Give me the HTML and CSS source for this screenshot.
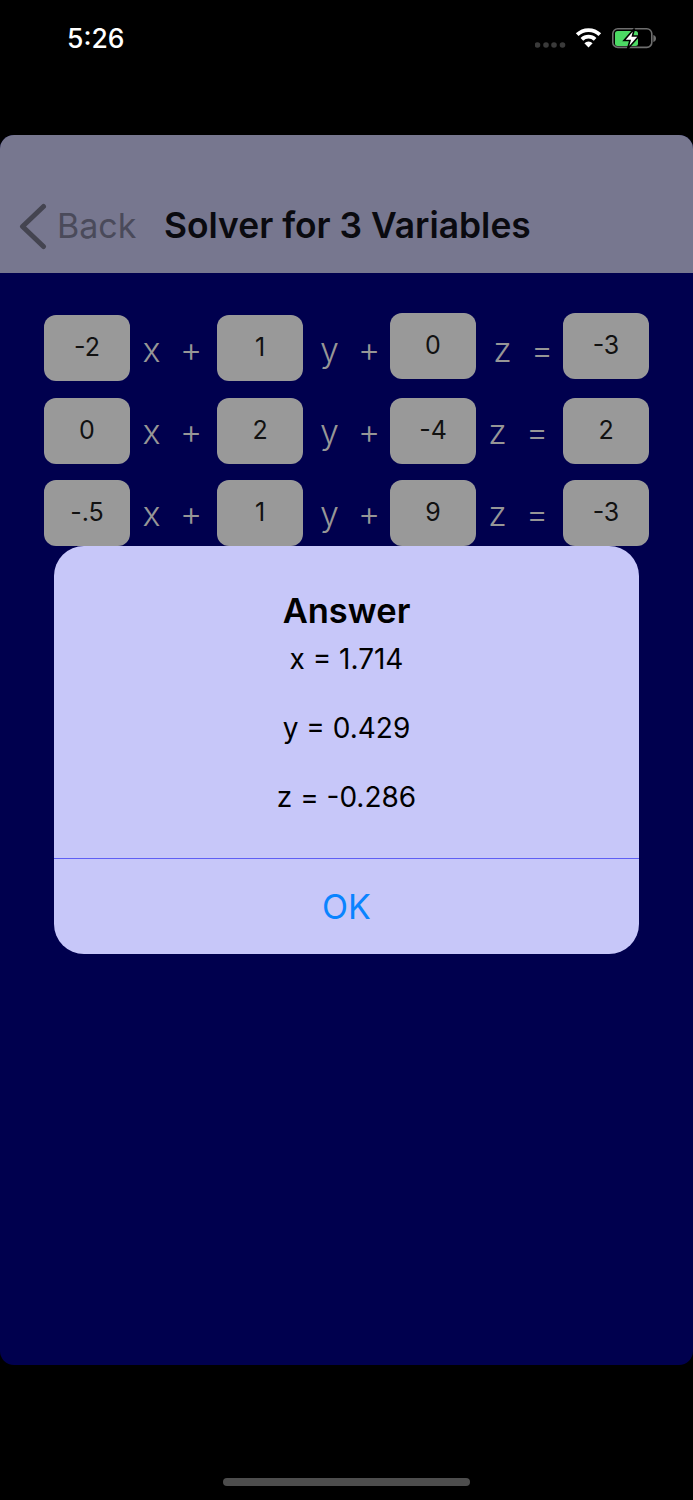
FILE: index.html
```html
<!DOCTYPE html>
<html lang="en">
<head>
  <meta charset="UTF-8">
  <title>Solver for 3 Variables</title>
  <link rel="stylesheet" href="styles.css">
</head>
<body>

  <div class="status-bar">
    <span class="clock">5:26</span>
    <svg class="status-icons" viewBox="536 27 122 22" width="122" height="22">
      <circle cx="538.5" cy="45" r="2.8" fill="#3a3a3a"/>
      <circle cx="547" cy="45" r="2.8" fill="#3a3a3a"/>
      <circle cx="555" cy="45" r="2.8" fill="#3a3a3a"/>
      <circle cx="563.5" cy="45" r="2.8" fill="#3a3a3a"/>
      <path d="M578.2 34.7A16 16 0 0 1 600.8 34.7" fill="none" stroke="#fff" stroke-width="3.8"/>
      <path d="M582.9 39.4A9.4 9.4 0 0 1 596.1 39.4" fill="none" stroke="#fff" stroke-width="3.8"/>
      <path d="M589.5 47.5L585.4 43.2A5.8 5.8 0 0 1 593.6 43.2Z" fill="#fff"/>
      <rect x="613.8" y="28.8" width="39" height="18.6" rx="5" fill="none" stroke="#6e6e6e" stroke-width="1.6"/>
      <path d="M654.3 35v7c1.700-.5 2.700-1.800 2.700-3.500s-1-3-2.700-3.500Z" fill="#6e6e6e"/>
      <rect x="616" y="31" width="23" height="15" rx="2.500" fill="#4cd964"/>
      <path d="M635.500 28.500L625 40.500H631L628.500 49L640 36H633.500Z" fill="#fff" stroke="#000" stroke-width="1.600"/>
    </svg>
  </div>

  <div class="screen">
    <div class="nav-bar">
      <a class="back">
        <svg class="chevron" viewBox="0 0 30 48" width="30" height="48">
          <path d="M26.500 4.500L5.500 24.500L26.500 44.500" fill="none" stroke="#444450" stroke-width="5" stroke-linecap="round" stroke-linejoin="round"/>
        </svg>
        <span>Back</span>
      </a>
      <h1>Solver for 3 Variables</h1>
    </div>

    <div class="equations">
      <div class="row first">
        <div class="cell">-2</div>
        <div class="gap"><span class="var">x</span><span class="op">+</span></div>
        <div class="cell">1</div>
        <div class="gap wide"><span class="var">y</span><span class="op">+</span></div>
        <div class="cell raised">0</div>
        <div class="gap wide"><span class="var">z</span><span class="op">=</span></div>
        <div class="cell raised">-3</div>
      </div>
      <div class="row">
        <div class="cell">0</div>
        <div class="gap"><span class="var">x</span><span class="op">+</span></div>
        <div class="cell">2</div>
        <div class="gap wide"><span class="var">y</span><span class="op">+</span></div>
        <div class="cell">-4</div>
        <div class="gap"><span class="var">z</span><span class="op">=</span></div>
        <div class="cell">2</div>
      </div>
      <div class="row">
        <div class="cell">-.5</div>
        <div class="gap"><span class="var">x</span><span class="op">+</span></div>
        <div class="cell">1</div>
        <div class="gap wide"><span class="var">y</span><span class="op">+</span></div>
        <div class="cell">9</div>
        <div class="gap"><span class="var">z</span><span class="op">=</span></div>
        <div class="cell">-3</div>
      </div>
    </div>

    <div class="alert">
      <div class="alert-body">
        <h2>Answer</h2>
        <p>x = 1.714</p>
        <p>y = 0.429</p>
        <p>z = -0.286</p>
      </div>
      <div class="alert-button">OK</div>
    </div>
  </div>

  <div class="home-area">
    <div class="home-indicator"></div>
  </div>

</body>
</html>
```

FILE: styles.css
```css
body {
  margin: 0;
  width: 693px;
  height: 1500px;
  overflow: hidden;
  background: #000;
  font-family: Inter, "Liberation Sans", sans-serif;
}
.status-bar {
  height: 135px;
  box-sizing: border-box;
  padding: 27px 36px 0 67px;
  display: flex;
  justify-content: space-between;
  align-items: flex-start;
}
.clock {
  color: #fff;
  font-size: 26.500px;
  font-weight: 500;
  line-height: 22px;
}
.status-icons {
  display: block;
}
.screen {
  position: relative;
  height: 1230px;
  background: #00004e;
  border-radius: 14px;
}
.nav-bar {
  height: 138px;
  box-sizing: border-box;
  padding: 0 0 23px 17px;
  background: #77778f;
  border-radius: 14px 14px 0 0;
  display: flex;
  align-items: flex-end;
}
.back {
  display: flex;
  align-items: center;
  gap: 10px;
  width: 147px;
  color: #4a4a5a;
  font-size: 34px;
  line-height: 48px;
}
.chevron {
  display: block;
  width: 30px;
  height: 48px;
}
.nav-bar h1 {
  margin: 0;
  color: #0a0a0f;
  font-size: 35.400px;
  font-weight: 600;
  line-height: 48px;
}
.equations {
  padding: 42px 0 0 44px;
  display: flex;
  flex-direction: column;
  gap: 16px;
}
.row {
  display: flex;
  height: 66px;
}
.row.first {
  height: 67px;
}
.cell {
  width: 86px;
  height: 66px;
  box-sizing: border-box;
  padding-bottom: 2px;
  background: #999;
  border-radius: 12px;
  color: #111;
  font-size: 25px;
  display: flex;
  align-items: center;
  justify-content: center;
}
.cell.raised {
  margin-top: -2px;
}
.gap {
  width: 87px;
  box-sizing: border-box;
  display: flex;
  align-items: center;
  color: #969696;
  font-size: 34px;
  font-weight: 300;
  padding-top: 1px;
}
.gap.wide {
  padding-left: 5px;
}
.var {
  width: 43px;
  text-align: center;
}
.op {
  width: 36px;
  text-align: center;
}
.alert {
  position: absolute;
  left: 54px;
  top: 411px;
  width: 585px;
  height: 408px;
  background: #c7c7f9;
  border-radius: 30px;
  color: #000;
  text-align: center;
}
.alert-body {
  height: 313px;
  box-sizing: border-box;
  padding-top: 44px;
  border-bottom: 1px solid #5f5ff5;
}
.alert h2 {
  margin: 0 0 9px;
  font-size: 34.500px;
  font-weight: 600;
  line-height: 42px;
}
.alert p {
  margin: 0 0 33px;
  font-size: 28px;
  line-height: 36px;
}
.alert-button {
  height: 95px;
  display: flex;
  align-items: center;
  justify-content: center;
  color: #0a84ff;
  font-size: 34px;
}
.home-area {
  height: 135px;
  box-sizing: border-box;
  padding: 113px 0 0 223px;
}
.home-indicator {
  width: 247px;
  height: 8px;
  background: #4d4d4d;
  border-radius: 4px;
}
```
